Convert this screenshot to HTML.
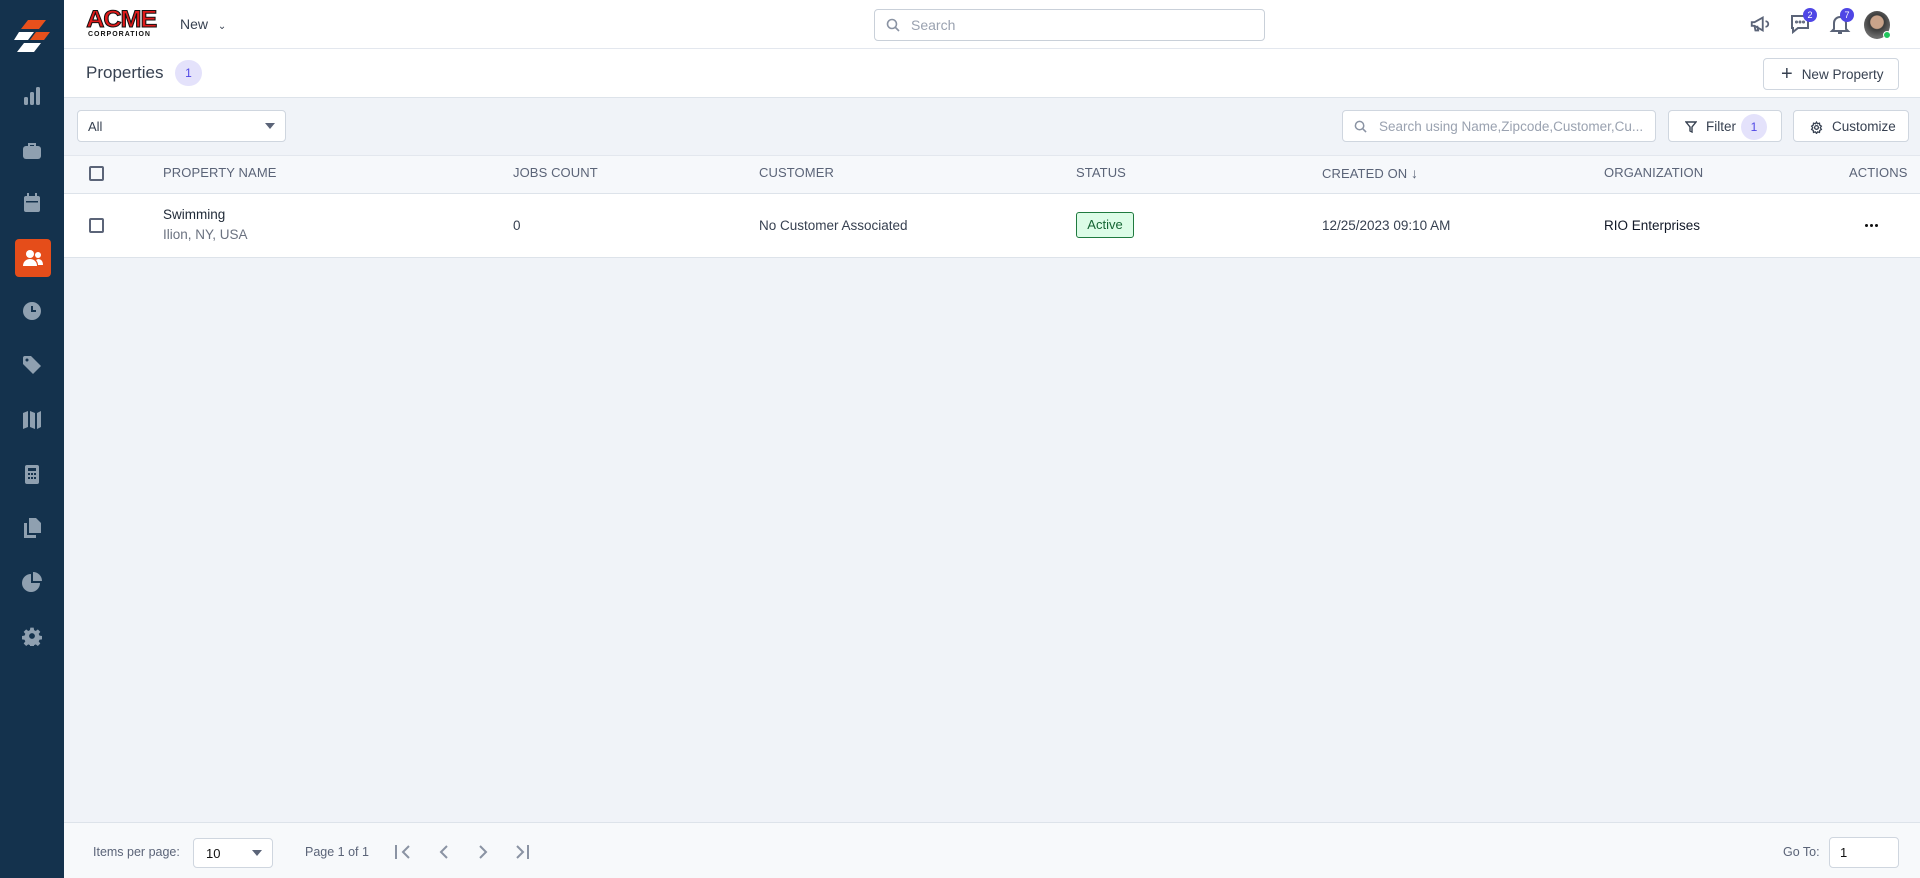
<!DOCTYPE html>
<html><head><meta charset="utf-8"><style>
*{box-sizing:border-box;margin:0;padding:0}
body{width:1920px;height:878px;overflow:hidden;font-family:"Liberation Sans",sans-serif;background:#f0f3f8;position:relative;color:#1f2937;white-space:nowrap}
.abs{position:absolute}
#side{left:0;top:0;width:64px;height:878px;background:#14324d}
.si{position:absolute;left:20px;width:24px;height:24px}
#top{left:64px;top:0;right:0;height:49px;background:#fff;border-bottom:1px solid #e3e7ee}
#title{left:64px;top:49px;right:0;height:49px;background:#fff;border-bottom:1px solid #dde3ea}
.btn{position:absolute;background:#fff;border:1px solid #cfd6df;border-radius:4px;font-size:13.5px;color:#374151;display:flex;align-items:center;white-space:nowrap;overflow:hidden}
.th{position:absolute;top:165px;font-size:13px;color:#5b6478;letter-spacing:.1px}
.td{position:absolute;font-size:13.5px;color:#374151}
.cb{position:absolute;width:15px;height:15px;border:2px solid #5b6478;border-radius:2px}
</style></head><body>
<div id="side" class="abs">
 <svg class="abs" style="left:14px;top:18px" width="36" height="40" viewBox="0 0 36 40"><path d="M14 2h18l-7 9H7z" fill="#e8501c"/><path d="M5 14h15l-6 8H0z" fill="#fff"/><path d="M22 14h14l-6 8H16z" fill="#e8501c"/><path d="M10 25h17l-7 9H3z" fill="#fff"/></svg>
 <svg class="si" style="top:84px" viewBox="0 0 24 24" fill="#8fa0b0"><rect x="4" y="13" width="4" height="8" rx="1.5"/><rect x="10" y="8" width="4" height="13" rx="1.5"/><rect x="16" y="3" width="4" height="18" rx="1.5"/></svg>
 <svg class="si" style="top:138px" viewBox="0 0 24 24" fill="#8fa0b0"><path d="M8 5h8v3h-2V7h-4v1H8z"/><rect x="3" y="8" width="18" height="13" rx="3"/></svg>
 <svg class="si" style="top:191px" viewBox="0 0 24 24" fill="#8fa0b0"><rect x="4" y="5" width="16" height="16" rx="2"/><rect x="7" y="2" width="2" height="4"/><rect x="15" y="2" width="2" height="4"/><rect x="6" y="10" width="12" height="1.5" fill="#14324d"/></svg>
 <div class="abs" style="left:15px;top:239px;width:36px;height:38px;background:#e54d1a;border-radius:4px"></div>
 <svg class="si" style="left:21px;top:246px" viewBox="0 0 24 24" fill="#fff"><circle cx="9" cy="8" r="4"/><circle cx="17" cy="9" r="3"/><path d="M2 20c0-5 4-7 7-7s7 2 7 7z"/><path d="M17 13c3 0 5 2 5 6h-5c0-2-1-4-2-5z"/></svg>
 <svg class="si" style="top:299px" viewBox="0 0 24 24"><circle cx="12" cy="12" r="9" fill="#8fa0b0"/><path d="M12 7v5h4" stroke="#14324d" stroke-width="2" fill="none"/></svg>
 <svg class="si" style="top:353px" viewBox="0 0 24 24" fill="#8fa0b0"><path d="M3 5v6l10 10 8-8L11 3H5a2 2 0 0 0-2 2z"/><circle cx="7" cy="7" r="1.5" fill="#14324d"/></svg>
 <svg class="si" style="top:408px" viewBox="0 0 24 24" fill="#8fa0b0"><path d="M3 5l5-2v16l-5 2zM10 3l5 2v16l-5-2zM17 5l4-2v16l-4 2z"/></svg>
 <svg class="si" style="top:462px" viewBox="0 0 24 24" fill="#8fa0b0"><rect x="5" y="3" width="14" height="19" rx="2"/><rect x="8" y="6" width="8" height="3" fill="#14324d"/><g fill="#14324d"><rect x="8" y="11" width="2" height="2"/><rect x="11" y="11" width="2" height="2"/><rect x="14" y="11" width="2" height="2"/><rect x="8" y="15" width="2" height="2"/><rect x="11" y="15" width="2" height="2"/><rect x="14" y="15" width="2" height="2"/></g></svg>
 <svg class="si" style="top:516px" viewBox="0 0 24 24" fill="#8fa0b0"><path d="M9 2h7l5 5v10H9z"/><path d="M4 7h3v12h9v3H4z"/></svg>
 <svg class="si" style="top:570px" viewBox="0 0 24 24" fill="#8fa0b0"><path d="M11 4a9 9 0 1 0 9 9h-9z"/><path d="M13 2a9 9 0 0 1 9 9h-9z"/></svg>
 <svg class="si" style="top:626px;width:20px;height:20px;left:22px" viewBox="0 0 24 24" fill="#8fa0b0"><path d="M10 2h4l.5 3 2 1 2.5-2 3 3-2 2.5 1 2 3 .5v4l-3 .5-1 2 2 2.5-3 3-2.5-2-2 1-.5 3h-4l-.5-3-2-1-2.5 2-3-3 2-2.5-1-2-3-.5v-4l3-.5 1-2-2-2.5 3-3 2.5 2 2-1z"/><circle cx="12" cy="12" r="3.5" fill="#14324d"/></svg>
</div>
<div id="top" class="abs">
 <div class="abs" style="left:24px;top:9px;width:72px;height:32px">
  <div style="font:900 24px/22px 'Liberation Sans';color:#e01b1b;letter-spacing:-1px;-webkit-text-stroke:1px #111;transform:scaleX(1.05)">ACME</div>
  <div style="font:700 7px 'Liberation Sans';color:#111;letter-spacing:1px">CORPORATION</div>
 </div>
 <div class="abs" style="left:116px;top:16px;font-size:14px;color:#374151">New <span style="font-size:10px;margin-left:6px">&#8964;</span></div>
 <div class="abs" style="left:810px;top:9px;width:391px;height:32px;border:1px solid #c9d0d9;border-radius:4px">
  <svg class="abs" style="left:11px;top:8px" width="14" height="14" viewBox="0 0 14 14" fill="none" stroke="#8a93a3" stroke-width="1.6"><circle cx="6" cy="6" r="4.5"/><path d="M9.5 9.5L13 13"/></svg>
  <div class="abs" style="left:36px;top:7px;font-size:14px;color:#9aa2b0">Search</div>
 </div>
 <svg class="abs" style="left:1685px;top:13px" width="22" height="22" viewBox="0 0 24 24" fill="none" stroke="#5b6478" stroke-width="2"><path d="M3 10v4h3l9 5V5L6 10z"/><path d="M6 14l1 5h3l-1-5"/><path d="M18 9a3 3 0 0 1 0 6"/></svg>
 <svg class="abs" style="left:1724px;top:12px" width="24" height="24" viewBox="0 0 24 24" fill="none" stroke="#5b6478" stroke-width="2"><path d="M4 4h16v12H10l-5 4v-4H4z"/><circle cx="8.5" cy="10" r=".5" fill="#5b6478"/><circle cx="12" cy="10" r=".5" fill="#5b6478"/><circle cx="15.5" cy="10" r=".5" fill="#5b6478"/></svg>
 <div class="abs" style="left:1739px;top:8px;width:14px;height:14px;border-radius:7px;background:#4f46e5;color:#fff;font-size:9px;text-align:center;line-height:14px">2</div>
 <svg class="abs" style="left:1764px;top:12px" width="24" height="24" viewBox="0 0 24 24" fill="none" stroke="#5b6478" stroke-width="2"><path d="M6 17V11a6 6 0 0 1 12 0v6l2 2H4z"/><path d="M10 21h4"/></svg>
 <div class="abs" style="left:1776px;top:8px;width:14px;height:14px;border-radius:7px;background:#4f46e5;color:#fff;font-size:9px;text-align:center;line-height:14px">7</div>
 <div class="abs" style="left:1800px;top:11px;width:26px;height:28px;border-radius:50%;background:radial-gradient(circle at 50% 40%,#c9a38a 0 30%,#3b3b3b 34%,#6b6b6b 70%)"></div>
 <div class="abs" style="left:1819px;top:31px;width:8px;height:8px;border-radius:4px;background:#22c55e;border:1px solid #fff"></div>
</div>
<div id="title" class="abs">
 <div class="abs" style="left:22px;top:14px;font-size:17px;color:#374151">Properties</div>
 <div class="abs" style="left:111px;top:11px;width:27px;height:26px;border-radius:13px;background:#e4e2fb;color:#4f46e5;font-size:12px;text-align:center;line-height:26px">1</div>
</div>
<div class="btn" style="left:1763px;top:58px;width:136px;height:32px;padding-left:17px"><span style="font-size:20px;margin-right:9px;font-weight:300">+</span>New Property</div>
<div class="btn" style="left:77px;top:110px;width:209px;height:32px;padding-left:10px;font-size:13px">All<span class="abs" style="right:10px;top:12px;border:5px solid transparent;border-top:6px solid #5b6478"></span></div>
<div class="btn" style="left:1342px;top:110px;width:314px;height:32px;padding-left:36px;color:#9aa2b0;font-size:13.5px">Search using Name,Zipcode,Customer,Cu...
 <svg class="abs" style="left:11px;top:9px" width="13" height="13" viewBox="0 0 14 14" fill="none" stroke="#8a93a3" stroke-width="1.6"><circle cx="6" cy="6" r="4.5"/><path d="M9.5 9.5L13 13"/></svg></div>
<div class="btn" style="left:1668px;top:110px;width:114px;height:32px;padding-left:37px">Filter
 <svg class="abs" style="left:16px;top:10px" width="12" height="12" viewBox="0 0 12 12" fill="none" stroke="#374151" stroke-width="1.4"><path d="M1 1h10L7 6v5L5 10V6z"/></svg>
 <span class="abs" style="left:72px;top:3px;width:26px;height:26px;border-radius:13px;background:#e4e2fb;color:#4f46e5;font-size:12px;text-align:center;line-height:26px">1</span></div>
<div class="btn" style="left:1793px;top:110px;width:116px;height:32px;padding-left:38px">Customize
 <svg class="abs" style="left:16px;top:10px" width="13" height="13" viewBox="0 0 24 24" fill="none" stroke="#374151" stroke-width="2.4"><circle cx="12" cy="12" r="3.5"/><path d="M12 2l2 3 3.5-1 .5 3.5 3 2-2 3 2 3-3 2-.5 3.5-3.5-1-2 3-2-3-3.5 1-.5-3.5-3-2 2-3-2-3 3-2 .5-3.5 3.5 1z"/></svg></div>
<div class="abs" style="left:64px;top:155px;right:0;height:39px;background:#f6f8fb;border-top:1px solid #e3e7ee;border-bottom:1px solid #dde3ea"></div>
<div class="abs" style="left:64px;top:194px;right:0;height:64px;background:#fff;border-bottom:1px solid #dde3ea"></div>
<div class="cb" style="left:89px;top:166px"></div>
<div class="th" style="left:163px">PROPERTY NAME</div>
<div class="th" style="left:513px">JOBS COUNT</div>
<div class="th" style="left:759px">CUSTOMER</div>
<div class="th" style="left:1076px">STATUS</div>
<div class="th" style="left:1322px">CREATED ON <span style="font-size:14px">&#8595;</span></div>
<div class="th" style="left:1604px">ORGANIZATION</div>
<div class="th" style="left:1849px">ACTIONS</div>
<div class="cb" style="left:89px;top:218px"></div>
<div class="td" style="left:163px;top:207px;color:#1f2937">Swimming</div>
<div class="td" style="left:163px;top:227px;color:#6b7280">Ilion, NY, USA</div>
<div class="td" style="left:513px;top:218px">0</div>
<div class="td" style="left:759px;top:218px">No Customer Associated</div>
<div class="abs" style="left:1076px;top:212px;width:58px;height:26px;border:1px solid #1f7a3f;background:#dcfce7;border-radius:3px;color:#166534;font-size:13px;text-align:center;line-height:24px">Active</div>
<div class="td" style="left:1322px;top:218px">12/25/2023 09:10 AM</div>
<div class="td" style="left:1604px;top:218px;color:#111827">RIO Enterprises</div>
<div class="abs" style="left:1865px;top:224px;width:3px;height:3px;border-radius:2px;background:#111;box-shadow:5px 0 #111,10px 0 #111"></div>
<div class="abs" style="left:64px;top:822px;right:0;height:56px;background:#f7f9fb;border-top:1px solid #dde3ea"></div>
<div class="abs" style="left:93px;top:845px;font-size:12.5px;color:#5b6478">Items per page:</div>
<div class="btn" style="left:193px;top:838px;width:80px;height:30px;padding-left:12px;font-size:13px;color:#111">10<span class="abs" style="right:10px;top:11px;border:5px solid transparent;border-top:6px solid #5b6478"></span></div>
<div class="abs" style="left:305px;top:845px;font-size:12.5px;color:#5b6478">Page 1 of 1</div>
<svg class="abs" style="left:393px;top:843px" width="140" height="18" viewBox="0 0 140 18" fill="none" stroke="#8a93a3" stroke-width="2"><path d="M3 2v14M16 3l-6 6 6 6"/><path d="M54 3l-6 6 6 6"/><path d="M87 3l6 6-6 6"/><path d="M124 3l6 6-6 6M135 2v14"/></svg>
<div class="abs" style="left:1783px;top:845px;font-size:12.5px;color:#5b6478">Go To:</div>
<div class="btn" style="left:1829px;top:837px;width:70px;height:31px;padding-left:10px;font-size:13px;color:#111">1</div>
</body></html>
